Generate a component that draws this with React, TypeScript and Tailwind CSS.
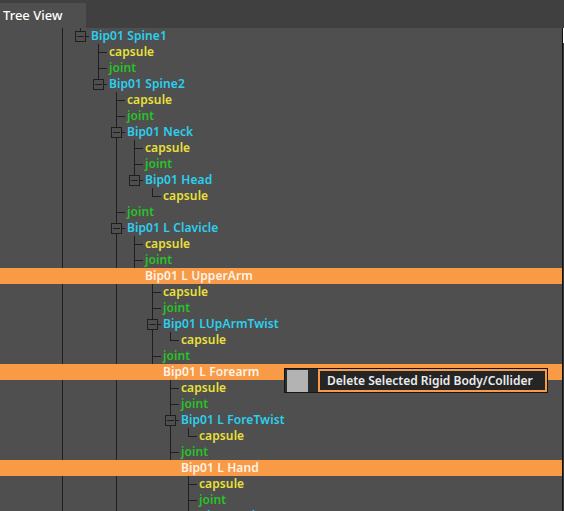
import { FC } from 'react'

type Kind = 'bone' | 'capsule' | 'joint'

interface Row {
    label: string;
    depth: number;
    kind: Kind;
    selected?: boolean;
    hidden?: boolean;
}

const rows: Row[] = [
    { label: 'Bip01 Spine1', depth: 1, kind: 'bone' },
    { label: 'capsule', depth: 2, kind: 'capsule' },
    { label: 'joint', depth: 2, kind: 'joint' },
    { label: 'Bip01 Spine2', depth: 2, kind: 'bone' },
    { label: 'capsule', depth: 3, kind: 'capsule' },
    { label: 'joint', depth: 3, kind: 'joint' },
    { label: 'Bip01 Neck', depth: 3, kind: 'bone' },
    { label: 'capsule', depth: 4, kind: 'capsule' },
    { label: 'joint', depth: 4, kind: 'joint' },
    { label: 'Bip01 Head', depth: 4, kind: 'bone' },
    { label: 'capsule', depth: 5, kind: 'capsule' },
    { label: 'joint', depth: 3, kind: 'joint' },
    { label: 'Bip01 L Clavicle', depth: 3, kind: 'bone' },
    { label: 'capsule', depth: 4, kind: 'capsule' },
    { label: 'joint', depth: 4, kind: 'joint' },
    { label: 'Bip01 L UpperArm', depth: 4, kind: 'bone', selected: true },
    { label: 'capsule', depth: 5, kind: 'capsule' },
    { label: 'joint', depth: 5, kind: 'joint' },
    { label: 'Bip01 LUpArmTwist', depth: 5, kind: 'bone' },
    { label: 'capsule', depth: 6, kind: 'capsule' },
    { label: 'joint', depth: 5, kind: 'joint' },
    { label: 'Bip01 L Forearm', depth: 5, kind: 'bone', selected: true },
    { label: 'capsule', depth: 6, kind: 'capsule' },
    { label: 'joint', depth: 6, kind: 'joint' },
    { label: 'Bip01 L ForeTwist', depth: 6, kind: 'bone' },
    { label: 'capsule', depth: 7, kind: 'capsule' },
    { label: 'joint', depth: 6, kind: 'joint' },
    { label: 'Bip01 L Hand', depth: 6, kind: 'bone', selected: true },
    { label: 'capsule', depth: 7, kind: 'capsule' },
    { label: 'joint', depth: 7, kind: 'joint' },
    { label: 'Bip01 L Finger0', depth: 7, kind: 'bone' },
    // below the fold, only used to work out the guide lines
    { label: 'Bip01 R Clavicle', depth: 3, kind: 'bone', hidden: true },
]

// is there a later sibling at this depth before the branch closes?
const continues = (from: number, depth: number) => {
    if (depth === 0) return true
    for (let j = from + 1; j < rows.length; j++) {
        if (rows[j].depth < depth) return false
        if (rows[j].depth === depth) return true
    }
    return false
}

const colorFor: Record<Kind, string> = {
    bone: 'text-[#2bd0ef]',
    capsule: 'text-[#e9e13a]',
    joint: 'text-[#27c327]',
}

const Guide: FC<{ down: boolean }> = ({ down }) => (
    <div className="relative w-[18px] h-4 shrink-0">
        {down && <span className="absolute left-[9px] top-0 h-4 w-px bg-[#1f1f1f]" />}
    </div>
)

const Connector: FC<{ down: boolean; box: boolean }> = ({ down, box }) => (
    <div className="relative w-[18px] h-4 shrink-0">
        <span className={`absolute left-[9px] top-0 w-px bg-[#1f1f1f] ${down ? 'h-4' : 'h-[9px]'}`} />
        <span className="absolute left-[9px] top-[8px] h-px w-[9px] bg-[#1f1f1f]" />
        {box && (
            <span className="absolute left-[4px] top-[3px] w-[11px] h-[11px] border border-[#1f1f1f] bg-[#4f4f4f] flex items-center justify-center">
                <span className="w-[7px] h-px bg-[#1f1f1f]" />
            </span>
        )}
    </div>
)

const TreeRow: FC<{ row: Row; index: number }> = ({ row, index }) => {
    if (row.selected) {
        return (
            <div className="h-4 bg-[#f89a46] flex items-center">
                <span
                    className="text-[#fff3ea] text-[12px] leading-4 font-semibold tracking-[0.1px] whitespace-nowrap"
                    style={{ paddingLeft: 73 + 18 * row.depth }}
                >
                    {row.label}
                </span>
            </div>
        )
    }

    const cells = []
    for (let c = 0; c < row.depth; c++) {
        cells.push(<Guide key={c} down={continues(index, c)} />)
    }

    return (
        <div className="h-4 flex items-center pl-[53px]">
            {cells}
            <Connector down={continues(index, row.depth)} box={row.kind === 'bone'} />
            <span className={`ml-[2px] text-[12px] leading-4 font-semibold tracking-[0.1px] whitespace-nowrap ${colorFor[row.kind]}`}>
                {row.label}
            </span>
        </div>
    )
}

const ContextMenu: FC = () => (
    <div className="absolute left-[284px] top-[368px] h-[25px] w-[264px] bg-[#2c2c2c] border border-[#151515] flex items-center gap-[10px] pl-[2px]">
        <div className="w-[21px] h-[22px] bg-[#b3b3b3]" />
        <div className="flex-1 h-[23px] border-2 border-[#f89a46] bg-[#252525] flex items-center pl-[7px]">
            <span className="text-[12px] font-semibold text-[#ececec] whitespace-nowrap">
                Delete Selected Rigid Body/Collider
            </span>
        </div>
    </div>
)

const App: FC = () => {
    return (
        <div
            className="relative w-[564px] h-[511px] overflow-hidden bg-[#4f4f4f] flex flex-col"
            style={{ fontFamily: '"Noto Sans", "Open Sans", sans-serif' }}
        >
            <div className="h-[28px] bg-[#404040] flex items-end shrink-0">
                <div className="w-[86px] h-[25px] bg-[#4f4f4f] flex items-center pl-[3px]">
                    <span className="text-[13px] font-medium text-white">Tree View</span>
                </div>
            </div>

            <div className="flex flex-1 min-h-0">
                <div className="relative flex-1 min-w-0 overflow-hidden">
                    <div className="flex flex-col">
                        {rows.filter(r => !r.hidden).map((row, i) => (
                            <TreeRow key={i} row={row} index={i} />
                        ))}
                    </div>
                </div>
                <div className="w-px bg-[#111]" />
                <div className="w-px flex flex-col">
                    <div className="h-[15px] bg-white" />
                    <div className="flex-1 bg-[#3a3a3a]" />
                </div>
            </div>

            <ContextMenu />
        </div>
    )
}

export default App
